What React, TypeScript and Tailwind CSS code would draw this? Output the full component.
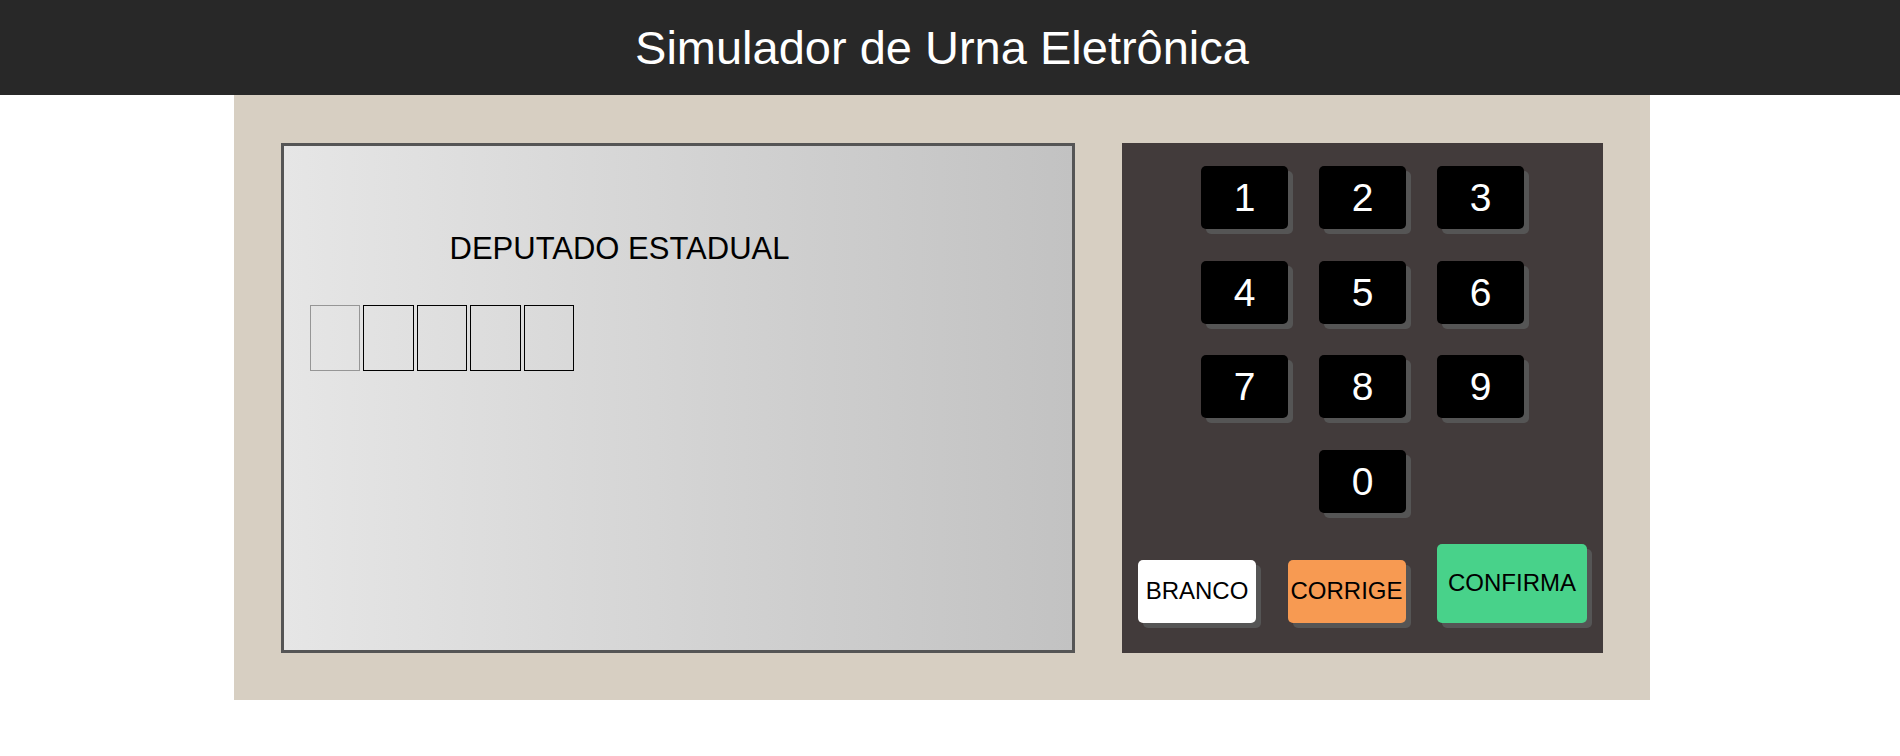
import { useState } from "react";

const ROWS = [["1", "2", "3"], ["4", "5", "6"], ["7", "8", "9"], ["0"]];
const LENGTH = 5;
const KEY = "rounded-[5px] shadow-[5px_5px_0_#555555] cursor-pointer";

export default function App() {
  const [digits, setDigits] = useState("");
  const press = (n: string) =>
    setDigits((d) => (d.length < LENGTH ? d + n : d));
  const clear = () => setDigits("");

  return (
    <div className="font-['Liberation_Sans',Arial,sans-serif] text-black">
      <header className="flex h-[95px] items-center justify-center bg-[#282828] pr-4">
        <h1 className="text-[47px] leading-none text-white">Simulador de Urna Eletrônica</h1>
      </header>
      <div className="flex justify-center pr-4">
        <main className="flex w-full max-w-[1416px] gap-[47px] bg-[#d7cfc2] px-[47px] pt-12 pb-[47px]">
          <section className="min-w-0 flex-1 border-[3px] border-[#555555] bg-linear-[to_right,#e6e6e6,#c2c2c2] pt-[81px] pr-[143px] pl-[26px]">
            <h2 className="text-center text-[31px] leading-[43px]">DEPUTADO ESTADUAL</h2>
            <div className="mt-[35px] flex w-[264px] gap-[3px]">
              {Array.from({ length: LENGTH }, (_, i) => (
                <input
                  key={i}
                  readOnly
                  aria-label={`Dígito ${i + 1}`}
                  value={digits[i] ?? ""}
                  className={`h-[66px] min-w-0 flex-1 border text-center text-[39px] outline-none ${
                    i === digits.length ? "border-[#969696]" : "border-black"
                  }`}
                />
              ))}
            </div>
          </section>
          <section className="flex min-h-[510px] w-[481px] shrink-0 flex-col justify-between bg-[#423b3b] px-4 pt-[23px] pb-[30px]">
            {ROWS.map((row) => (
              <div key={row[0]} className="flex justify-center gap-[31px]">
                {row.map((n) => (
                  <button
                    key={n}
                    type="button"
                    onClick={() => press(n)}
                    className={`${KEY} h-[63px] w-[87px] bg-black text-[39px] leading-none text-white`}
                  >
                    {n}
                  </button>
                ))}
              </div>
            ))}
            <div className="flex items-end justify-between text-[24px] leading-none">
              <button type="button" onClick={clear} className={`${KEY} h-[63px] w-[118px] bg-white pb-0.5`}>
                BRANCO
              </button>
              <button type="button" onClick={clear} className={`${KEY} h-[63px] w-[118px] bg-[#f79a52] pb-0.5`}>
                CORRIGE
              </button>
              <button type="button" onClick={clear} className={`${KEY} h-[79px] w-[150px] bg-[#48d28a] pb-0.5`}>
                CONFIRMA
              </button>
            </div>
          </section>
        </main>
      </div>
    </div>
  );
}
